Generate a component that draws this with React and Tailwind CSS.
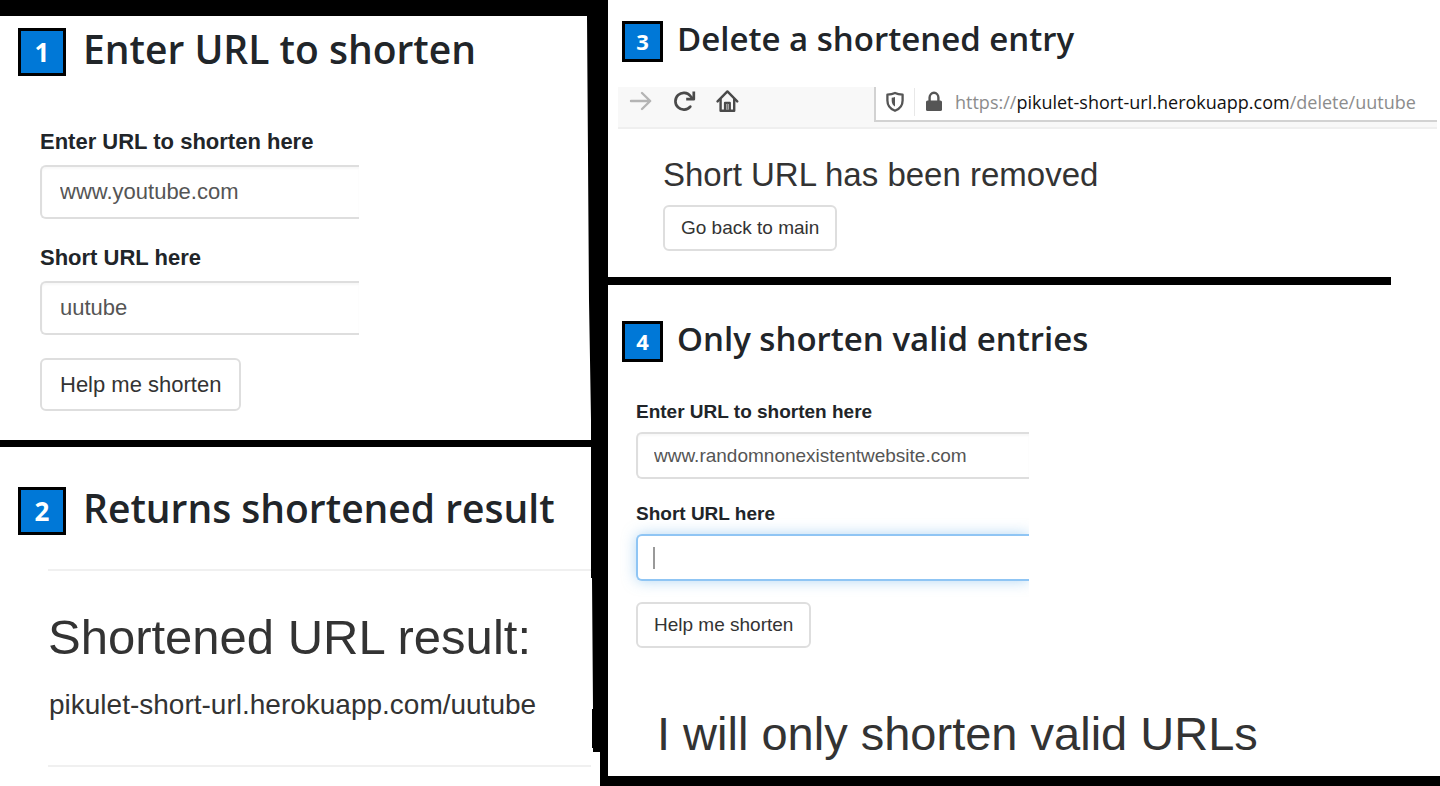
import React from "react";

function StepTitle({ number, size = "lg", children }) {
  const lg = size === "lg";
  return (
    <div className={lg ? "flex items-start gap-[17px] pl-[18px]" : "flex items-start gap-[14px] pl-[14px]"}>
      <span
        className={
          "flex shrink-0 items-center justify-center border-[3px] border-black bg-[#0078d7] pb-px font-['Open_Sans',sans-serif] font-bold leading-none text-white " +
          (lg ? "size-12 text-[26px]" : "size-[41px] text-[22px]")
        }
      >
        {number}
      </span>
      <h2
        className={
          "whitespace-nowrap font-['Open_Sans',sans-serif] font-semibold text-[#212529] " +
          (lg ? "text-[39px] leading-[42px]" : "text-[33px] leading-[36px]")
        }
      >
        {children}
      </h2>
    </div>
  );
}

function Field({ id, label, value, size = "lg", focused = false }) {
  const lg = size === "lg";
  return (
    <div className="flex flex-col">
      <label
        htmlFor={id}
        className={"font-bold text-[#212529] " + (lg ? "pb-[7px] text-[22px] leading-[32px]" : "pb-[6px] text-[19px] leading-[28px]")}
      >
        {label}
      </label>
      <div className="relative flex">
        <input
          id={id}
          type="text"
          defaultValue={value}
          className={
            "w-full rounded-l-md border-2 border-r-0 bg-white text-[#555] outline-none " +
            (lg ? "h-[54px] pl-[18px] text-[22px] " : "h-[47px] pl-4 text-[19px] ") +
            (focused
              ? "border-[#8fc5f4] shadow-[0_0_14px_rgba(102,175,233,0.5)] [clip-path:inset(-16px_0_-16px_-16px)]"
              : "border-[#dedede] shadow-[inset_0_2px_2px_rgba(0,0,0,0.03)]")
          }
        />
        {focused && <span className="absolute top-[13px] left-[17px] h-[22px] w-[2px] bg-[#999]" />}
      </div>
    </div>
  );
}

function ActionButton({ size = "lg", children }) {
  return (
    <button
      type="button"
      className={
        "self-start whitespace-nowrap rounded-md border-2 border-[#dedede] bg-white text-[#333] " +
        (size === "lg" ? "h-[53px] px-[18px] text-[22px]" : "h-[46px] px-4 text-[19px]")
      }
    >
      {children}
    </button>
  );
}

function ForwardIcon() {
  return (
    <svg width="24" height="24" viewBox="0 0 24 24" fill="none" stroke="#b4b4b4" strokeWidth="2.4" strokeLinecap="round" strokeLinejoin="round">
      <path d="M3 12H22M14 4L22.2 12L14 20" />
    </svg>
  );
}

function ReloadIcon() {
  return (
    <svg width="24" height="24" viewBox="0 0 24 24" fill="none" stroke="#4a4a4a" strokeWidth="2.7" strokeLinejoin="round">
      <path d="M18.3 17.6A8.4 8.4 0 1 1 18.4 7L20.6 9.6" strokeLinecap="round" />
      <path d="M21.8 2.6V10.2H14.2" />
    </svg>
  );
}

function HomeIcon() {
  return (
    <svg width="24" height="24" viewBox="0 0 24 24" fill="none" stroke="#4a4a4a" strokeWidth="2.4" strokeLinecap="round" strokeLinejoin="round">
      <path d="M1.6 12.4L11.4 2.4L21.2 12.4" />
      <path d="M4.6 10.5V21.8H18.2V10.5" />
      <path d="M9 21V13.8H13.8V21" strokeWidth="2.2" />
      <path d="M11.4 15.5V20" strokeWidth="2" stroke="#777" />
    </svg>
  );
}

function ShieldIcon() {
  return (
    <svg className="shrink-0" width="20" height="22" viewBox="0 0 20 22" fill="none" stroke="#555" strokeWidth="2.3" strokeLinejoin="round">
      <path d="M10 2C7.6 3.2 5 3.6 2.4 3.7V9.5C2.4 14.6 5.4 18 10 19.8C14.6 18 17.6 14.6 17.6 9.5V3.7C15 3.6 12.4 3.2 10 2Z" />
      <path d="M10 6C9 6.5 7.8 6.7 6.7 6.8V9.8C6.7 12.4 7.9 14.4 10 15.5Z" fill="#555" stroke="none" />
    </svg>
  );
}

function LockIcon() {
  return (
    <svg width="18" height="22" viewBox="0 0 18 22">
      <path d="M4.6 11V6.6A4.4 4.8 0 0 1 13.4 6.6V11" fill="none" stroke="#555" strokeWidth="2.4" />
      <rect x="1" y="9.5" width="16" height="10.5" rx="1.6" fill="#555" />
    </svg>
  );
}

function BrowserBar() {
  return (
    <div className="ml-[10px] mr-[3px] flex h-[42px] items-start border-b-2 border-[#efefef] bg-[#f8f8f8]">
      <div className="flex w-[256px] shrink-0 items-center gap-5 pl-[10px] pt-[2px]">
        <button type="button" aria-label="Forward"><ForwardIcon /></button>
        <button type="button" aria-label="Reload"><ReloadIcon /></button>
        <button type="button" aria-label="Home"><HomeIcon /></button>
      </div>
      <div className="flex h-[35px] min-w-0 grow items-center border-b-2 border-l-2 border-[#d2d2d2] bg-white pb-1 pl-[9px]">
        <ShieldIcon />
        <span className="ml-[9px] h-7 w-px shrink-0 bg-[#e8e8e8]" />
        <span className="ml-[10px] shrink-0"><LockIcon /></span>
        <div
          role="textbox"
          aria-label="Address"
          className="ml-3 whitespace-nowrap font-['Open_Sans',sans-serif] text-[18px] leading-6 text-[#8c8c8c]"
        >
          https://<span className="text-[#111]">pikulet-short-url.herokuapp.com</span>/delete/uutube
        </div>
      </div>
    </div>
  );
}

export default function App() {
  return (
    <main className="grid min-h-screen grid-cols-[587fr_21px_832fr] bg-white font-['Liberation_Sans',Arial,sans-serif]">
      <div className="flex min-w-0 flex-col">
        <section className="border-t-[16px] border-black pb-[29px] pt-3">
          <StepTitle number="1">Enter URL to shorten</StepTitle>
          <form className="mt-[50px] flex w-full max-w-[359px] flex-col gap-[23px] pl-10">
            <Field id="url-1" label="Enter URL to shorten here" value="www.youtube.com" />
            <Field id="short-1" label="Short URL here" value="uutube" />
            <ActionButton>Help me shorten</ActionButton>
          </form>
        </section>
        <section className="-mr-1 border-t-[7px] border-black pt-10">
          <StepTitle number="2">Returns shortened result</StepTitle>
          <div className="ml-12 mt-[34px] border-y-2 border-[#f0f0f0] pb-[43px] pt-[38px] text-[#333]">
            <h1 className="whitespace-nowrap text-[49px] leading-[56px]">Shortened URL result:</h1>
            <p className="mt-[23px] whitespace-nowrap pl-[1px] text-[28px] leading-[34px]">pikulet-short-url.herokuapp.com/uutube</p>
          </div>
        </section>
      </div>

      <svg className="relative h-full w-full" viewBox="0 0 21 786" preserveAspectRatio="none">
        <path d="M0 0H21V786H13V752H6V748H5V709H6L5 578H4V420L2 300L0 16Z" fill="#000" />
      </svg>

      <div className="flex min-w-0 flex-col border-b-[10px] border-black">
        <section className="pb-[26px] pt-[21px]">
          <StepTitle number="3" size="sm">Delete a shortened entry</StepTitle>
          <div className="mt-[25px]">
            <BrowserBar />
          </div>
          <div className="flex flex-col pl-[55px] pt-[26px]">
            <h1 className="whitespace-nowrap text-[33px] leading-[39px] text-[#333]">Short URL has been removed</h1>
            <div className="mt-[11px] flex">
              <ActionButton size="sm">Go back to main</ActionButton>
            </div>
          </div>
        </section>
        <hr className="mr-[49px] h-2 border-0 bg-black" />
        <section className="pt-9">
          <StepTitle number="4" size="sm">Only shorten valid entries</StepTitle>
          <form className="mt-9 flex w-full max-w-[421px] flex-col gap-[21px] pl-7">
            <Field id="url-2" size="sm" label="Enter URL to shorten here" value="www.randomnonexistentwebsite.com" />
            <Field id="short-2" size="sm" label="Short URL here" value="" focused />
            <ActionButton size="sm">Help me shorten</ActionButton>
          </form>
          <p className="mt-[58px] whitespace-nowrap pl-[49px] text-[47px] leading-[56px] text-[#333]">
            I will only shorten valid URLs
          </p>
        </section>
      </div>
    </main>
  );
}
